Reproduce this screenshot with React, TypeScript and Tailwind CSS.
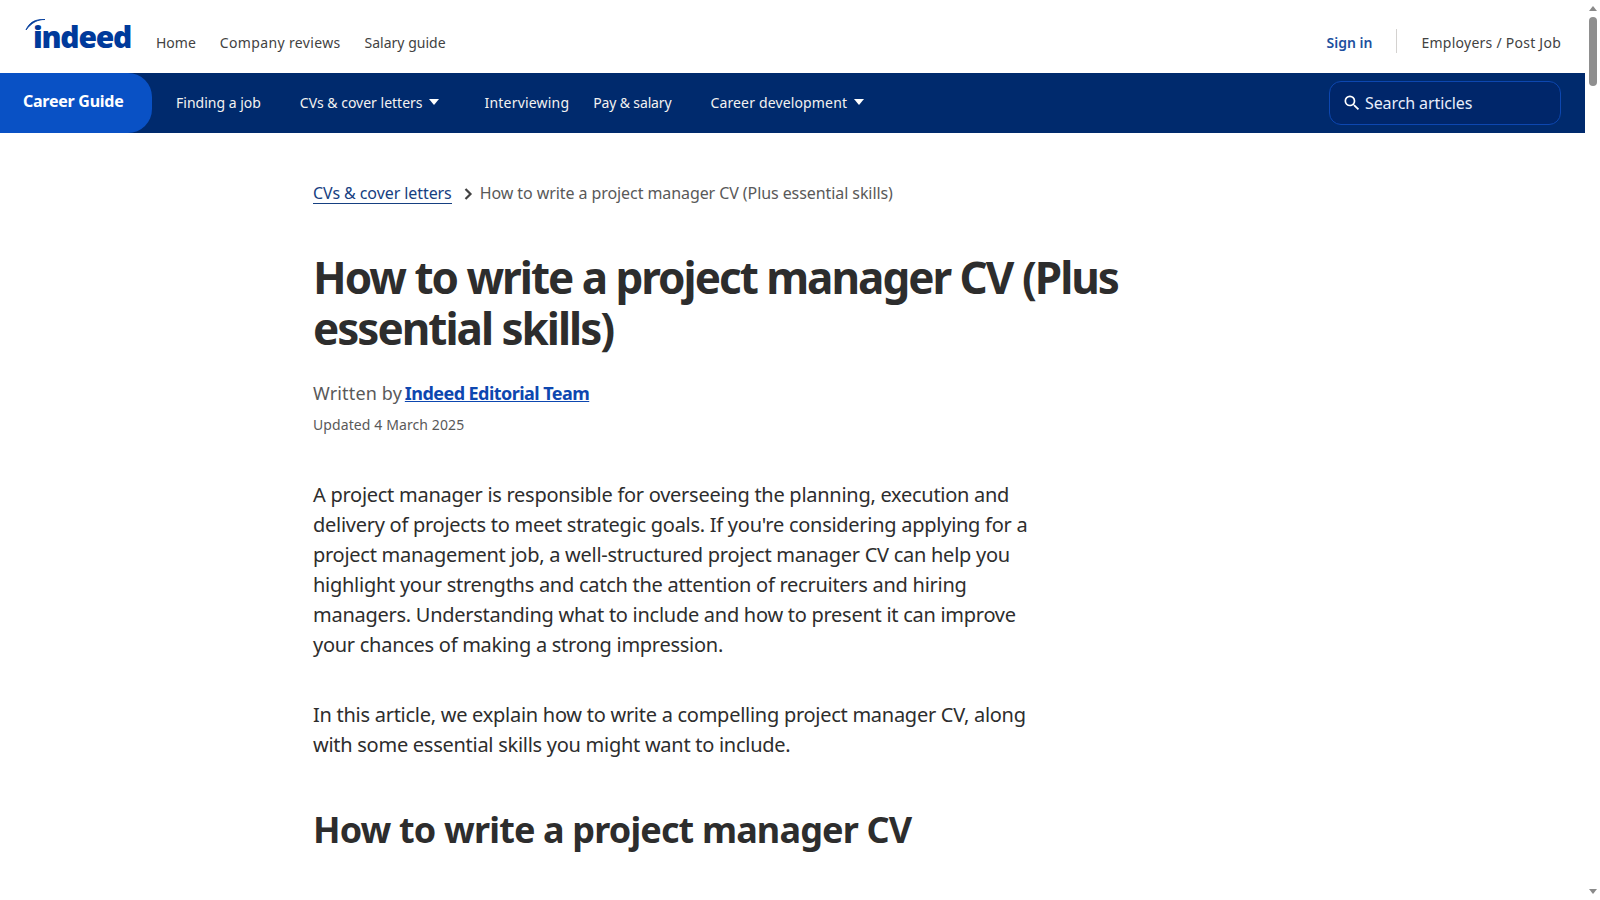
const font = { fontFamily: '"Noto Sans", sans-serif' };

const Caret = ({ className }: { className: string }) => (
  <svg width="10" height="6" viewBox="0 0 10 6" className={className}>
    <path d="M0 0h10L5 6z" fill="#fff" />
  </svg>
);

const Logo = () => (
  <a className="relative block w-[106px] h-[40px] mt-[-6px] mr-[25px] text-[#003a9b]">
    <span className="block text-[30px] leading-[40px] font-extrabold tracking-[-1.25px] pl-[8px] pt-[3px] font-['Open_Sans',sans-serif]">indeed</span>
    <svg width="24" height="14" viewBox="0 0 24 14" className="absolute left-0 top-[3px]">
      <path d="M1 13C4 6 9 2 20 2.5C13 2.5 7 5 1 13z" fill="#003a9b" stroke="#003a9b" strokeWidth="0.8" />
    </svg>
  </a>
);

const Scrollbar = () => (
  <div className="w-[15px] shrink-0 h-full bg-white flex flex-col items-center">
    <div className="h-[17px] flex items-center justify-center">
      <div className="w-0 h-0 border-l-[4px] border-r-[4px] border-b-[5px] border-l-transparent border-r-transparent border-b-[#8a8a8a]" />
    </div>
    <div className="w-[8px] h-[69px] rounded-[4px] bg-[#8f8f8f]" />
    <div className="flex-1" />
    <div className="h-[17px] flex items-center justify-center">
      <div className="w-0 h-0 border-l-[4px] border-r-[4px] border-t-[5px] border-l-transparent border-r-transparent border-t-[#8a8a8a]" />
    </div>
  </div>
);

export default function App() {
  return (
    <div className="flex h-screen overflow-hidden bg-white text-[#2d2d2d]" style={font}>
      <div className="flex-1 min-w-0 overflow-hidden">
        {/* Top bar */}
        <header className="h-[73px] flex items-center pl-[25px] pr-[24px]">
          <Logo />
          <nav className="flex gap-[24px] text-[14px] text-[#424242] pt-[11px]">
            <a>Home</a>
            <a className="tracking-[0.35px]">Company reviews</a>
            <a>Salary guide</a>
          </nav>
          <div className="ml-auto flex items-center text-[14px] pt-[11px]">
            <a className="font-semibold text-[#1d4f9e] pr-[24px]">Sign in</a>
            <div className="w-px h-[24px] bg-[#d4d2d0] mr-[24px] mt-[-3px]" />
            <a className="text-[#424242] tracking-[0.25px]">Employers / Post Job</a>
          </div>
        </header>

        {/* Career guide nav */}
        <div className="h-[60px] bg-[#002a6d] flex items-center pr-[24px] text-[14px] text-[#f3f2f1]">
          <div className="h-full w-[152px] bg-[#0951c5] rounded-r-[24px] pl-[23px] pb-[5px] flex items-center text-[16px] font-bold tracking-[-0.25px] text-white">
            Career Guide
          </div>
          <a className="ml-[24px] pb-[2px]">Finding a job</a>
          <a className="ml-[39px] pb-[2px] flex items-center">CVs &amp; cover letters<Caret className="ml-[6px]" /></a>
          <a className="ml-[46px] pb-[2px] tracking-[0.2px]">Interviewing</a>
          <a className="ml-[24px] pb-[2px] tracking-[-0.15px]">Pay &amp; salary</a>
          <a className="ml-[39px] pb-[2px] flex items-center tracking-[0.15px]">Career development<Caret className="ml-[7px]" /></a>
          <div className="ml-auto w-[232px] h-[44px] rounded-[12px] border border-[#0d47b0] bg-[#00266a] flex items-center pl-[12px] text-[16px] tracking-[-0.1px] text-[#e8eefc]">
            <svg width="20" height="20" viewBox="0 0 24 24" fill="#fff" className="mr-[3px]">
              <path d="M15.5 14h-.79l-.28-.27A6.471 6.471 0 0 0 16 9.5 6.5 6.5 0 1 0 9.5 16c1.61 0 3.09-.59 4.23-1.57l.27.28v.79l5 4.99L20.49 19l-4.99-5zm-6 0C7.01 14 5 11.99 5 9.5S7.01 5 9.5 5 14 7.01 14 9.5 11.99 14 9.5 14z" />
            </svg>
            Search articles
          </div>
        </div>

        {/* Article */}
        <main className="pl-[313px] pt-[49px]">
          <div className="flex items-center h-[22px] text-[16px] tracking-[-0.08px] text-[#595959]">
            <a className="h-[22px] text-[#164081] border-b border-[#164081] leading-[22px]">CVs &amp; cover letters</a>
            <svg width="12" height="14" viewBox="0 0 12 14" className="ml-[10px] mr-[6px] mt-[2px]">
              <path d="M3.5 2l5 5-5 5" fill="none" stroke="#424242" strokeWidth="2.2" />
            </svg>
            <span>How to write a project manager CV (Plus essential skills)</span>
          </div>

          <h1 className="mt-[48px] w-[830px] text-[44px] leading-[51px] font-bold tracking-[-2px] text-[#2d2d2d]">
            How to write a project manager CV (Plus essential skills)
          </h1>

          <p className="mt-[25px] h-[28px] text-[18px] leading-[28px] tracking-[0.15px] text-[#595959]">
            Written by <a className="ml-[-2px] font-bold tracking-[-0.55px] text-[#0d47b0] underline">Indeed Editorial Team</a>
          </p>
          <p className="mt-[7px] text-[14px] leading-[21px] tracking-[0.1px] text-[#595959]">Updated 4 March 2025</p>

          <div className="mt-[45px] w-[736px] text-[20px] leading-[30px] tracking-[-0.27px] text-[#2d2d2d]">
            <p>
              A project manager is responsible for overseeing the planning, execution and delivery of projects to meet strategic goals. If you're considering applying for a project management job, a well-structured project manager CV can help you highlight your strengths and catch the attention of recruiters and hiring managers. Understanding what to include and how to present it can improve your chances of making a strong impression.
            </p>
            <p className="mt-[40px]">
              In this article, we explain how to write a compelling project manager CV, along with some essential skills you might want to include.
            </p>
          </div>

          <h2 className="mt-[48px] text-[36px] leading-[44px] font-bold tracking-[-0.85px] text-[#2d2d2d]">
            How to write a project manager CV
          </h2>
        </main>
      </div>
      <Scrollbar />
    </div>
  );
}
